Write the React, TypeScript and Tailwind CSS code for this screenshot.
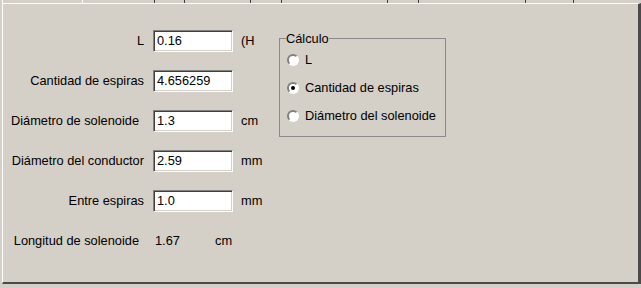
const sunken =
  "h-[22px] w-[80px] border border-t-[#808080] border-l-[#808080] border-b-white border-r-white bg-white shadow-[inset_1px_1px_0_#404040,inset_-1px_-1px_0_#d4d0c8] pl-[3px] flex items-center";

const Field = ({ label, value, unit, pad }: { label: string; value: string; unit: string; pad?: boolean }) => (
  <div className="flex h-[22px] items-center">
    <div className={"w-[141px] text-right " + (pad ? "pr-[5px]" : "")}>{label}</div>
    <div className="w-[9px]" />
    <div className={sunken}>{value}</div>
    <div className="pl-[8px]">{unit}</div>
  </div>
);

const Radio = ({ label, checked }: { label: string; checked?: boolean }) => (
  <div className="flex h-[28px] items-center gap-[6px]">
    <div className="flex h-[12px] w-[12px] items-center justify-center rounded-full border-2 border-t-[#808080] border-l-[#808080] border-b-white border-r-white bg-white">
      {checked && <div className="h-[4px] w-[4px] rounded-full bg-black" />}
    </div>
    <span>{label}</span>
  </div>
);

const App = () => {
  return (
    <div className="h-[288px] w-[641px] overflow-hidden bg-[#d4cfc7] text-[12.8px] leading-none text-black [font-family:'Liberation_Sans',Arial,sans-serif]">
      {/* tab strip remains */}
      <div className="flex h-[3px]">
        <div className="w-[2px]" />
        <div className="w-px bg-white" />
        <div className="w-[79px]" />
        <div className="w-px bg-white" />
        <div className="w-[71px]" />
        <div className="w-px bg-[#404040]" />
        <div className="w-[29px]" />
        <div className="w-px bg-[#404040]" />
        <div className="w-[65px]" />
        <div className="w-px bg-[#404040]" />
        <div className="w-[30px]" />
        <div className="w-px bg-[#404040]" />
        <div className="w-[105px]" />
        <div className="w-px bg-[#404040]" />
        <div className="w-[30px]" />
        <div className="w-px bg-[#404040]" />
        <div className="w-[106px]" />
        <div className="w-px bg-[#404040]" />
        <div className="w-[47px]" />
        <div className="w-px bg-[#404040]" />
        <div className="flex-1" />
      </div>
      <div className="ml-[2px] flex h-[281px] w-[639px] border-t border-l border-t-white border-l-white border-r-[3px] border-b-2 border-r-[#4a4a4a] border-b-[#4a4a4a]">
        <div className="flex w-[276px] flex-col gap-[18px] pt-[26px]">
          <Field label="L" value="0.16" unit="(H" />
          <Field label="Cantidad de espiras" value="4.656259" unit="" />
          <Field label="Diámetro de solenoide" value="1.3" unit="cm" pad />
          <Field label="Diámetro del conductor" value="2.59" unit="mm" />
          <Field label="Entre espiras" value="1.0" unit="mm" />
          <div className="flex h-[22px] items-center">
            <div className="w-[141px] pr-[5px] text-right">Longitud de solenoide</div>
            <div className="w-[11px]" />
            <div className="w-[60px]">1.67</div>
            <div>cm</div>
          </div>
        </div>
        <fieldset className="mt-[27px] h-fit w-[167px] border border-[#8a8a8a] pb-[6px] pl-[7px]">
          <legend className="-ml-px leading-[15px]">Cálculo</legend>
          <Radio label="L" />
          <Radio label="Cantidad de espiras" checked />
          <Radio label="Diámetro del solenoide" />
        </fieldset>
      </div>
    </div>
  );
};

export default App;
